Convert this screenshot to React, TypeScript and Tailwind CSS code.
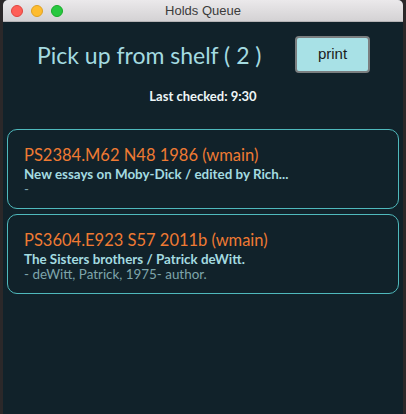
import React from 'react';

interface Hold {
  callNumber: string;
  title: string;
  author: string;
}

const holds: Hold[] = [
  {
    callNumber: 'PS2384.M62 N48 1986 (wmain)',
    title: 'New essays on Moby-Dick / edited by Rich...',
    author: '',
  },
  {
    callNumber: 'PS3604.E923 S57 2011b (wmain)',
    title: 'The Sisters brothers / Patrick deWitt.',
    author: 'deWitt, Patrick, 1975- author.',
  },
];

const HoldCard: React.FC<{ hold: Hold }> = ({ hold }) => {
  return (
    <div className="h-[80px] rounded-[10px] border border-[#4fb9bc] px-4 pt-[13px]">
      <div className="text-[16.5px] leading-[24px] text-[#ef7a33]">{hold.callNumber}</div>
      <div className="text-[13.4px] font-bold leading-[15px] text-[#a4dbe0]">{hold.title}</div>
      <div className="text-[13.4px] leading-[15px] text-[#7ea5aa]">- {hold.author}</div>
    </div>
  );
};

export default function App() {
  return (
    <div
      className="h-[414px] w-[406px] bg-[#2b2829] px-[3px]"
      style={{ fontFamily: 'Lato, "Open Sans", sans-serif' }}
    >
      <div className="flex h-full flex-col overflow-hidden rounded-t-[5px] bg-[#11222a]">
        <div className="relative flex h-[22px] items-center justify-center border-b border-[#b5b3b5] bg-gradient-to-b from-[#ebe9eb] to-[#d4d2d4]">
          <div className="absolute left-[8px] top-[5px] flex gap-[8px]">
            <span className="block h-[12px] w-[12px] rounded-full border border-[#e0443e] bg-[#fe5f57]"></span>
            <span className="block h-[12px] w-[12px] rounded-full border border-[#dea123] bg-[#febc2e]"></span>
            <span className="block h-[12px] w-[12px] rounded-full border border-[#1aab29] bg-[#28c840]"></span>
          </div>
          <span
            className="text-[13px] text-[#3b3b3b]"
            style={{ fontFamily: '"Liberation Sans", sans-serif' }}
          >
            Holds Queue
          </span>
        </div>

        <div className="mt-[14px] flex items-center pl-[34px]">
          <h1 className="w-[258px] text-[23px] leading-[36px] text-[#a4dbe0]">Pick up from shelf ( 2 )</h1>
          <button
            className="h-[37px] w-[75px] rounded-[4px] border-2 border-[#7b7f80] bg-[#a8e1e6] text-[15px] text-[#1b1b1b]"
            style={{ fontFamily: '"Liberation Sans", sans-serif' }}
          >
            print
          </button>
        </div>

        <div className="mt-[15px] text-center text-[13px] font-bold leading-[16px] text-[#eef6f7]">
          Last checked: 9:30
        </div>

        <div className="mt-[25px] flex flex-col gap-[5px] px-[4px]">
          {holds.map((hold) => (
            <HoldCard key={hold.callNumber} hold={hold} />
          ))}
        </div>
      </div>
    </div>
  );
}
